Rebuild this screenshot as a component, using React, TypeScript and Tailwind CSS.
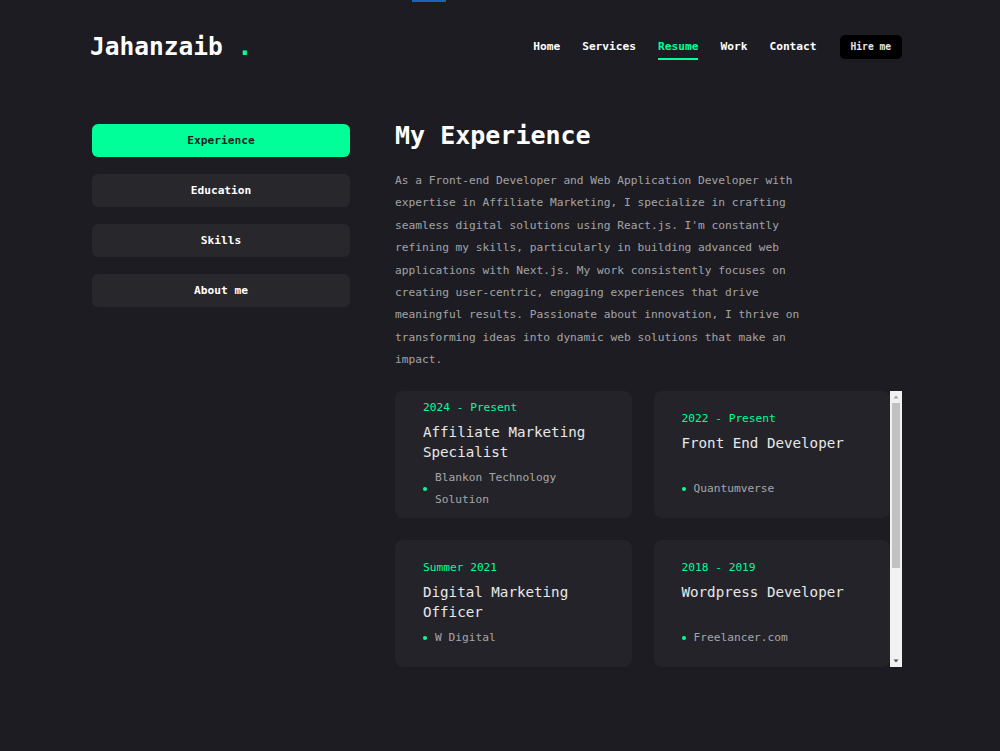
import React from 'react';

const navLinks = ['Home', 'Services', 'Resume', 'Work', 'Contact'];
const tabs = ['Experience', 'Education', 'Skills', 'About me'];

const jobs = [
  { date: '2024 - Present', title: 'Affiliate Marketing Specialist', company: 'Blankon Technology Solution' },
  { date: '2022 - Present', title: 'Front End Developer', company: 'Quantumverse' },
  { date: 'Summer 2021', title: 'Digital Marketing Officer', company: 'W Digital' },
  { date: '2018 - 2019', title: 'Wordpress Developer', company: 'Freelancer.com' },
];

// little scrollbar drawn by hand next to the list
const Scrollbar = () => (
  <div className="flex w-[12px] shrink-0 flex-col bg-[#f1f1f1]">
    <div className="flex h-[12px] items-center justify-center">
      <svg width="6" height="4" viewBox="0 0 6 4">
        <path d="M3 0.5 L5.5 3.5 L0.5 3.5 Z" fill="#a3a3a3" />
      </svg>
    </div>
    <div className="mx-[2px] h-[165px] bg-[#c1c1c1]" />
    <div className="flex-1" />
    <div className="flex h-[12px] items-center justify-center">
      <svg width="6" height="4" viewBox="0 0 6 4">
        <path d="M0.5 0.5 L5.5 0.5 L3 3.5 Z" fill="#505050" />
      </svg>
    </div>
  </div>
);

const App: React.FC = () => {
  return (
    <div className="relative min-h-[751px] bg-[#1c1c22] text-white font-['DejaVu_Sans_Mono','Liberation_Mono',monospace]">
      <div className="absolute left-[412px] top-0 h-[2px] w-[34px] bg-[#1565c0]" />

      <div className="ml-[90px] w-[812px]">
        {/* header */}
        <header className="flex h-[93px] items-center justify-between">
          <h1 className="text-[24.5px] font-bold leading-[32px]">
            Jahanzaib <span className="text-[#00ff99]">.</span>
          </h1>
          <div className="flex items-center gap-[23px]">
            <nav className="flex items-center gap-[22px]">
              {navLinks.map((link) => (
                <a
                  key={link}
                  className={`relative text-[11.2px] font-bold leading-[20px] ${
                    link === 'Resume' ? 'text-[#00ff99]' : 'text-white'
                  }`}
                >
                  {link}
                  {link === 'Resume' && (
                    <span className="absolute left-0 top-[21px] h-[2px] w-full bg-[#00ff99]" />
                  )}
                </a>
              ))}
            </nav>
            <button className="h-[24px] rounded-[5px] bg-black px-[11px] pt-[2px] text-[9.6px] font-bold text-white/90">
              Hire me
            </button>
          </div>
        </header>

        {/* main */}
        <main className="flex gap-[45px] pt-[31px]">
          <aside className="ml-[2px] flex w-[258px] shrink-0 flex-col gap-[17px]">
            {tabs.map((tab, i) => (
              <button
                key={tab}
                className={`h-[33px] rounded-[6px] pt-[1px] text-[11.2px] font-bold ${
                  i === 0 ? 'bg-[#00ff99] text-[#1c1c22]' : 'bg-[#27272c] text-white'
                }`}
              >
                {tab}
              </button>
            ))}
          </aside>

          <section className="flex-1">
            <h2 className="text-[25px] font-bold leading-[24px]">My Experience</h2>
            <p className="mt-[22px] w-[416px] text-[11.2px] leading-[22.4px] text-white/60">
              As a Front-end Developer and Web Application Developer with expertise in Affiliate
              Marketing, I specialize in crafting seamless digital solutions using React.js. I'm
              constantly refining my skills, particularly in building advanced web applications with
              Next.js. My work consistently focuses on creating user-centric, engaging experiences
              that drive meaningful results. Passionate about innovation, I thrive on transforming
              ideas into dynamic web solutions that make an impact.
            </p>

            <div className="mt-[19px] flex h-[276px] w-[507px]">
              <ul className="grid flex-1 grid-cols-2 content-start gap-[22px]">
                {jobs.map((job) => (
                  <li
                    key={job.title}
                    className="flex h-[127px] flex-col justify-center rounded-[8px] bg-[#232329] px-[28px] pt-[2px]"
                  >
                    <span className="mb-[5px] text-[11.2px] leading-[18px] text-[#00ff99]">
                      {job.date}
                    </span>
                    <h3 className="mb-[5px] min-h-[40px] text-[14.2px] leading-[20px] text-white/90">
                      {job.title}
                    </h3>
                    <div className="flex items-center gap-[8px]">
                      <span className="h-[4px] w-[4px] shrink-0 rounded-full bg-[#00ff99]" />
                      <p className="text-[11.2px] leading-[22.4px] text-white/60">{job.company}</p>
                    </div>
                  </li>
                ))}
              </ul>
              <Scrollbar />
            </div>
          </section>
        </main>
      </div>
    </div>
  );
};

export default App;
